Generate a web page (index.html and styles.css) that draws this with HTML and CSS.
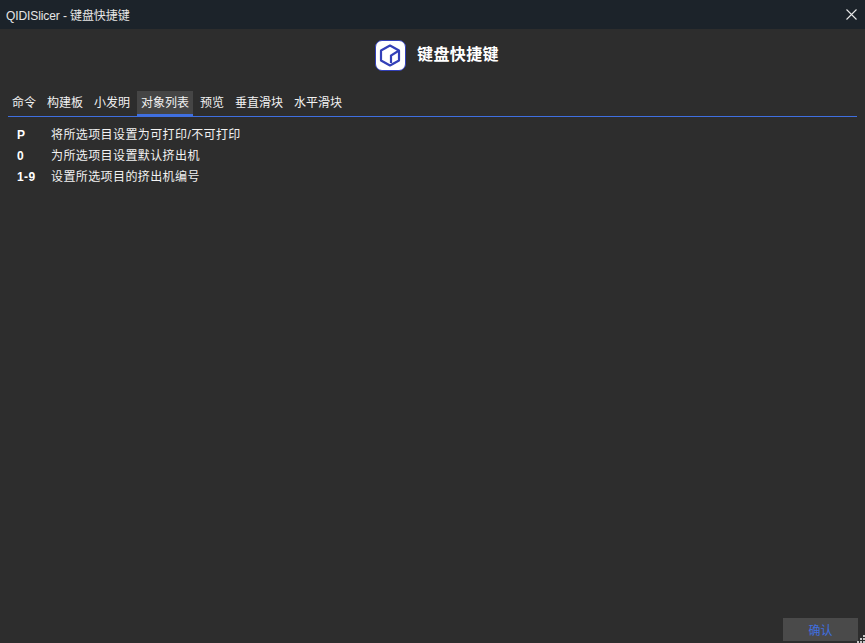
FILE: index.html
```html
<!DOCTYPE html>
<html lang="zh-CN">
<head>
    <meta charset="UTF-8">
    <title>QIDISlicer - 键盘快捷键</title>
    <link rel="stylesheet" href="styles.css">
</head>
<body>
    <div class="window">
        <div class="titlebar">
            <span class="title-text">QIDISlicer - 键盘快捷键</span>
            <svg class="close-icon" width="11" height="11" viewBox="0 0 11 11">
                <path d="M0.5 0.5L10.5 10.5M10.5 0.5L0.5 10.5" stroke="#e8e8e8" stroke-width="1.1" fill="none"/>
            </svg>
        </div>
        <div class="header">
            <div class="logo">
                <svg width="25" height="25" viewBox="0 0 25 25">
                    <path d="M12 2.5L21 7.5V17.5L12 22.5L3 17.5V7.5Z" fill="none" stroke="#3340b8" stroke-width="2.2" stroke-linejoin="round"/>
                    <path d="M21 7.5L13 12.5V20" fill="none" stroke="#3340b8" stroke-width="2.2"/>
                </svg>
            </div>
            <h1>键盘快捷键</h1>
        </div>
        <div class="tabs">
            <div class="tab">命令</div>
            <div class="tab">构建板</div>
            <div class="tab">小发明</div>
            <div class="tab active">对象列表</div>
            <div class="tab">预览</div>
            <div class="tab">垂直滑块</div>
            <div class="tab">水平滑块</div>
        </div>
        <div class="shortcuts">
            <div class="row"><span class="key">P</span><span>将所选项目设置为可打印/不可打印</span></div>
            <div class="row"><span class="key">0</span><span>为所选项目设置默认挤出机</span></div>
            <div class="row"><span class="key">1-9</span><span>设置所选项目的挤出机编号</span></div>
        </div>
        <div class="footer">
            <button class="ok-btn">确认</button>
        </div>
        <svg class="grip" width="8" height="8" viewBox="0 0 8 8">
            <path d="M6 0h2v2H6zM3 3h2v2H3zM6 3h2v2H6zM0 6h2v2H0zM3 6h2v2H3zM6 6h2v2H6z" fill="#c8c8c8"/>
        </svg>
    </div>
</body>
</html>
```

FILE: styles.css
```css
html, body {
    margin: 0;
    height: 100%;
}
body {
    font-family: "Liberation Sans", "Noto Sans CJK SC", sans-serif;
    font-size: 12px;
    color: #f2f2f2;
    background: #2d2d2d;
}
.window {
    position: relative;
    display: flex;
    flex-direction: column;
    height: 643px;
    overflow: hidden;
}
.titlebar {
    display: flex;
    justify-content: space-between;
    align-items: center;
    height: 29px;
    padding: 0 8px 0 6px;
    background: #1c232a;
    flex-shrink: 0;
}
.title-text {
    color: #e6e6e6;
    letter-spacing: -0.1px;
}
.header {
    display: flex;
    align-items: center;
    gap: 11px;
    height: 53px;
    padding-left: 375px;
}
.logo {
    display: flex;
    justify-content: center;
    align-items: center;
    width: 31px;
    height: 31px;
    background: #fff;
    border: 1px solid #3340b8;
    border-radius: 7px;
    box-sizing: border-box;
}
h1 {
    margin: 0 0 5px;
    font-size: 16px;
    font-weight: bold;
    letter-spacing: 0.4px;
    color: #fff;
}
.tabs {
    display: flex;
    gap: 3px;
    height: 25px;
    margin: 9px 8px 0;
    border-bottom: 1px solid #3f6fe0;
}
.tab {
    padding: 0 4px;
    height: 26px;
    line-height: 25px;
    box-sizing: border-box;
}
.tab.active {
    background: #454545;
    border-bottom: 3px solid #3f6fe0;
}
.shortcuts {
    display: flex;
    flex-direction: column;
    gap: 5px;
    padding: 10px 0 0 17px;
    letter-spacing: 0.4px;
}
.row {
    display: flex;
    height: 16px;
    line-height: 16px;
}
.key {
    width: 34px;
    font-weight: bold;
    color: #fff;
}
.footer {
    display: flex;
    justify-content: flex-end;
    margin-top: auto;
    padding: 0 7px 2px 0;
}
.ok-btn {
    width: 75px;
    height: 23px;
    padding: 0;
    border: none;
    background: #4a4a4a;
    color: #3f6fe0;
    font: inherit;
}
.grip {
    position: absolute;
    right: 0;
    bottom: 0;
}
```
